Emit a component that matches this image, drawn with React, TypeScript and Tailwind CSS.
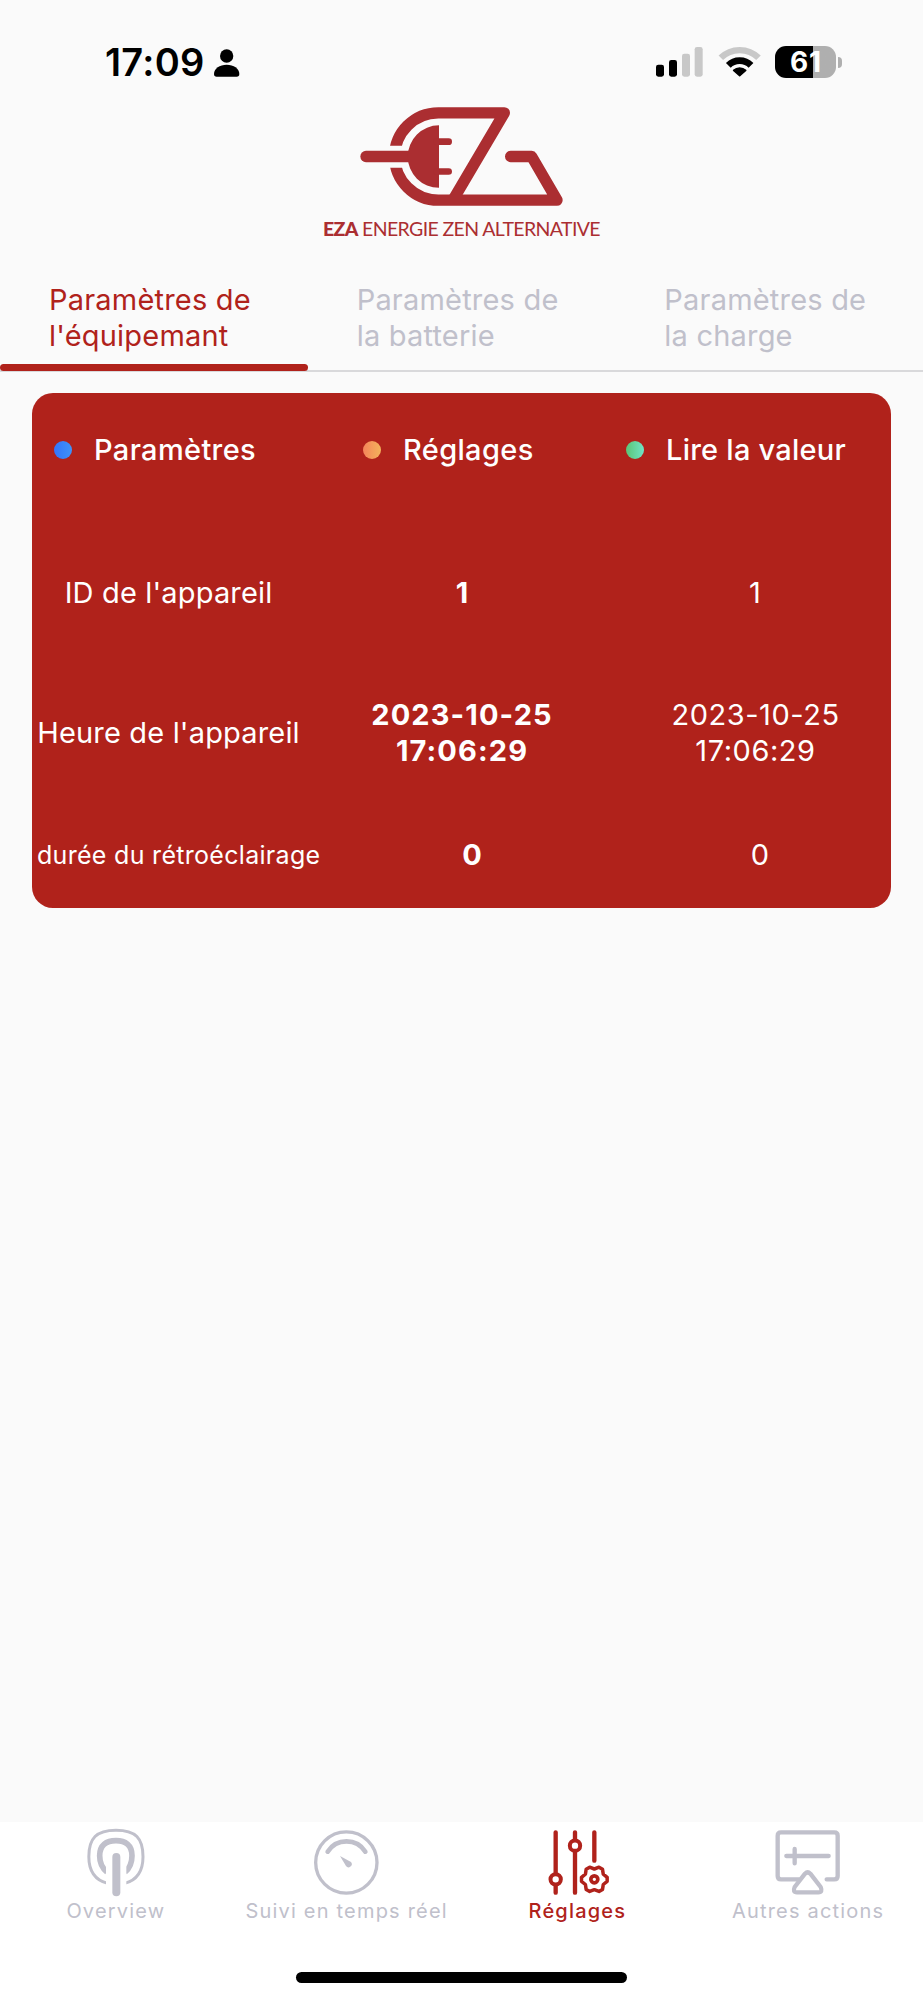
import type { ReactNode } from "react";

const TABS = [
  { lines: ["Paramètres de", "l'équipemant"], active: true },
  { lines: ["Paramètres de", "la batterie"], active: false },
  { lines: ["Paramètres de", "la charge"], active: false },
];

function StatusBar() {
  return (
    <header className="flex h-[95px] items-start justify-between pt-[38px] pr-[81px] pl-[105px]">
      <div className="flex">
        <span className="text-[38px] leading-[48px] font-semibold tracking-[0.28px]">17:09</span>
        <svg className="mt-[10px] ml-[8px] h-[30px] w-[28px]" viewBox="0 0 84 90" fill="#000">
          <ellipse cx="41" cy="24" rx="20" ry="20" />
          <path d="M3 78C3 61 20 50 41 50S79 61 79 78Q79 86 71 86H11Q3 86 3 78Z" />
        </svg>
      </div>
      <div className="flex pt-[6px]">
        <svg className="h-[36px] w-[50px]" viewBox="72 42 150 108">
          <rect x="75" y="104" width="24" height="36" rx="7" />
          <rect x="114" y="90" width="24" height="50" rx="7" />
          <rect x="153" y="71" width="24" height="69" rx="7" fill="#c8c8c8" />
          <rect x="191" y="51" width="24" height="89" rx="7" fill="#c8c8c8" />
        </svg>
        <svg className="ml-[12px] h-[36px] w-[44px]" viewBox="258 42 132 108" fill="none">
          <path d="M269.5 83.5A80 80 0 0 1 382.500 83.500" stroke="#c8c8c8" strokeWidth="19" />
          <path d="M292 106A47.500 47.500 0 0 1 360 106" stroke="#000" strokeWidth="20" />
          <path d="M326 137L308 121A27 27 0 0 1 344 121Z" fill="#000" stroke="#000" strokeWidth="5" strokeLinejoin="round" />
        </svg>
        <div className="ml-[14px] flex h-[36px] items-center">
          <div className="flex h-[32px] w-[61px] items-center justify-center rounded-[11px] bg-linear-to-r from-black from-[62%] to-[#afafaf] to-[62%] pl-px text-[28px] leading-[32px] font-bold tracking-[0.8px] text-white">
            61
          </div>
          <div className="ml-[2px] h-[11px] w-[4px] rounded-r-full bg-[#afafaf]" />
        </div>
      </div>
    </header>
  );
}

function Logo() {
  return (
    <div className="ml-[310px] h-[150px] w-[300px]">
      <svg className="block h-[120px] w-[300px]" viewBox="0 0 900 360" fill="none">
        <defs>
          <clipPath id="ring-gap">
            <path d="M0 0H900V152H0ZM0 218H900V450H0ZM380 140H900V230H380Z" />
          </clipPath>
        </defs>
        <g stroke="#ab2e31" strokeWidth="34" strokeLinejoin="round" strokeLinecap="round">
          <g clipPath="url(#ring-gap)">
            <path d="M254 184.500A131 131 0 0 1 385 53.500H583L430 313" strokeLinecap="butt" />
            <path d="M254 184.500A131 131 0 0 0 385 315.500H741L665 184.500H602" />
          </g>
          <path d="M168 184.500H310" />
        </g>
        <path d="M387 91V278.500A93.700 93.700 0 0 1 387 91Z" fill="#ab2e31" />
        <path d="M380 140H416M380 229.500H416" stroke="#ab2e31" strokeWidth="20" strokeLinecap="round" />
      </svg>
      <div className="flex h-[30px] text-[19.5px] leading-[27px] whitespace-nowrap text-[#ab2e31] font-['Lato',sans-serif]">
        <span className="ml-[13px] w-[39px] font-black tracking-[-0.6px]">EZA</span>
        <span className="tracking-[-0.62px]">ENERGIE ZEN ALTERNATIVE</span>
      </div>
    </div>
  );
}

function Tabs() {
  return (
    <nav className="grid h-[127px] grid-cols-3 border-b-2 border-[#d9d9db]">
      {TABS.map((tab) => (
        <div
          key={tab.lines[1]}
          className={`flex flex-col text-[29px] leading-[36px] tracking-[0.2px] ${tab.active ? "text-[#b0221b]" : "text-[#c0c0cb]"}`}
        >
          <div className="mt-[37px] flex-1 pl-[49px]">
            {tab.lines.map((line) => (
              <div key={line}>{line}</div>
            ))}
          </div>
          {tab.active && <div className="-mb-px h-[7px] shrink-0 rounded-full bg-[#b0221b]" />}
        </div>
      ))}
    </nav>
  );
}

function Legend({ dot, label, className }: { dot: string; label: string; className: string }) {
  return (
    <div className={`flex items-center gap-[22px] ${className}`}>
      <span className={`size-[18px] rounded-full bg-linear-to-r ${dot}`} />
      <span>{label}</span>
    </div>
  );
}

function Card() {
  return (
    <section className="mt-[21px] ml-[32px] h-[515px] w-[859px] rounded-[21px] bg-[#b0221b] text-[29px] leading-[36px] text-white">
      <div className="flex pt-[39px] font-medium">
        <Legend dot="from-[#3574fb] to-[#3f92f8]" label="Paramètres" className="w-[309px] pl-[22px] tracking-[0.35px]" />
        <Legend dot="from-[#f4845a] to-[#f3b25b]" label="Réglages" className="w-[263px] pl-[22px] tracking-[0.35px]" />
        <Legend dot="from-[#5cc474] to-[#70e4c6]" label="Lire la valeur" className="pl-[22px] tracking-[0.24px]" />
      </div>
      <div className="mt-[107px] grid grid-cols-[273px_314px_272px] text-center">
        <div className="tracking-[0.16px]">ID de l'appareil</div>
        <div className="font-bold">1</div>
        <div>1</div>
      </div>
      <div className="mt-[86px] grid grid-cols-[273px_314px_272px] items-center text-center">
        <div className="tracking-[0.17px]">Heure de l'appareil</div>
        <div className="font-bold tracking-[1.12px]">
          2023-10-25
          <br />
          17:06:29
        </div>
        <div className="pl-px tracking-[0.55px]">
          2023-10-25
          <br />
          17:06:29
        </div>
      </div>
      <div className="mt-[68px] grid grid-cols-[288px_304px_267px] text-center">
        <div className="pl-[5px] text-left text-[25px] tracking-[0.3px] whitespace-nowrap">durée du rétroéclairage</div>
        <div className="font-bold">0</div>
        <div className="pl-[5px]">0</div>
      </div>
    </section>
  );
}

function OverviewIcon() {
  return (
    <svg className="size-[72px]" viewBox="118 48 216 216" fill="none" stroke="currentColor">
      <defs>
        <clipPath id="mast-gap">
          <path d="M118 48H199V264H118ZM260 48H334V264H260ZM199 48H260V130H199Z" />
        </clipPath>
      </defs>
      <g clipPath="url(#mast-gap)">
        <path d="M204 220C165 210 147.500 185 147.500 140C147.500 85 170 60.500 229 60.500C288 60.500 310 85 310 140C310 185 293 210 255 220" strokeWidth="9" />
        <path d="M202 186C185 172 180 157 180 137C180 105 200 92 229 92C257 92 277 105 277 137C277 157 273 172 256 186" strokeWidth="17" />
      </g>
      <path d="M230 141V247" strokeWidth="24" strokeLinecap="round" />
    </svg>
  );
}

function GaugeIcon() {
  return (
    <svg className="size-[72px]" viewBox="810 48 216 216" fill="none" stroke="currentColor">
      <circle cx="919" cy="157.500" r="92" strokeWidth="10" />
      <path d="M863 125A67 67 0 0 1 976 125" strokeWidth="14" strokeLinecap="round" />
      <path d="M900 138L933 156A9.500 9.500 0 1 1 918 168Z" fill="currentColor" stroke="none" />
    </svg>
  );
}

function SlidersIcon() {
  return (
    <svg className="size-[72px]" viewBox="182 48 216 216" fill="none" stroke="currentColor" strokeWidth="13" strokeLinecap="round" strokeLinejoin="round">
      <path d="M226 67V188M226 229V248M284 67V88M284 127V248M342 67V152" />
      <circle cx="226" cy="208" r="15.500" strokeWidth="12" />
      <circle cx="284" cy="107" r="15.500" strokeWidth="12" />
      <path
        d="M38.500 -6.100V6.100L26.800 15.500L24.500 30.300L14 36.400L0 31L-14 36.400L-24.500 30.300L-26.800 15.500L-38.500 6.100V-6.100L-26.800 -15.500L-24.500 -30.300L-14 -36.400L0 -31L14 -36.400L24.500 -30.300L26.800 -15.500Z"
        transform="translate(342 208)"
        strokeWidth="10.500"
      />
      <circle cx="342" cy="208" r="10.500" strokeWidth="11" />
    </svg>
  );
}

function BoardIcon() {
  return (
    <svg className="size-[72px]" viewBox="874 48 216 216" fill="none" stroke="currentColor" strokeWidth="13" strokeLinecap="round" strokeLinejoin="round">
      <path d="M954 208H901Q891 208 891 198V77Q891 67 901 67H1061Q1071 67 1071 77V198Q1071 208 1061 208H1038" />
      <path d="M973 191Q981 183 989 191L1020 231Q1027 247 1013 247H949Q935 247 942 231Z" />
      <path d="M917 138H1044M942 117V160" />
    </svg>
  );
}

function NavItem({ icon, label, className }: { icon: ReactNode; label: string; className: string }) {
  return (
    <div className={`flex flex-col items-center text-[20px] leading-[24px] tracking-[1.2px] ${className}`}>
      {icon}
      <span className="mt-px pl-px whitespace-nowrap">{label}</span>
    </div>
  );
}

export default function App() {
  return (
    <div className="flex h-[2000px] w-[923px] flex-col bg-[#fafafa] font-['Inter',sans-serif]">
      <StatusBar />
      <Logo />
      <Tabs />
      <Card />
      <footer className="mt-auto flex h-[178px] flex-col bg-white pt-[4px]">
        <div className="grid grid-cols-4">
          <NavItem icon={<OverviewIcon />} label="Overview" className="text-[#c0c0cb]" />
          <NavItem icon={<GaugeIcon />} label="Suivi en temps réel" className="text-[#c0c0cb]" />
          <NavItem icon={<SlidersIcon />} label="Réglages" className="font-medium text-[#b0221b]" />
          <NavItem icon={<BoardIcon />} label="Autres actions" className="text-[#c0c0cb]" />
        </div>
        <div className="mx-auto mt-[49px] h-[11px] w-[331px] rounded-full bg-black" />
      </footer>
    </div>
  );
}
